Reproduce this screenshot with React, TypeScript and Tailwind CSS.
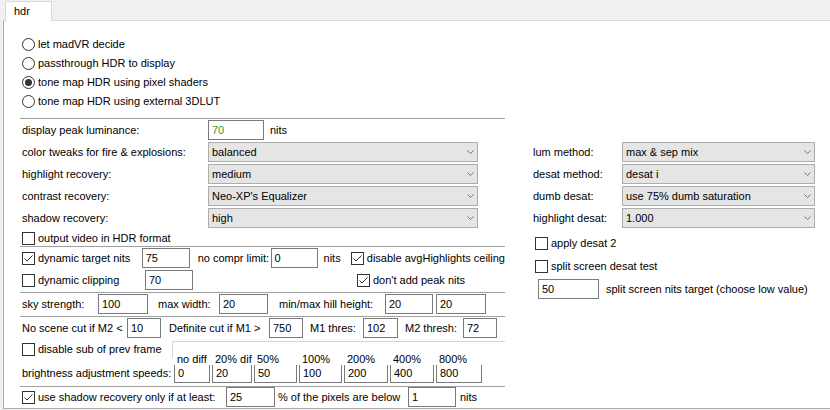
import React from "react";

const font = "[font-family:'Liberation_Sans',Arial,sans-serif]";

function Radio({ checked, label }: { checked?: boolean; label: string }) {
  return (
    <div className="flex h-[19px] items-center pl-[2px]">
      <span className="flex h-[13px] w-[13px] items-center justify-center rounded-full border border-[#333] bg-white">
        {checked && <span className="h-[7px] w-[7px] rounded-full bg-[#333]" />}
      </span>
      <span className="ml-[3px]">{label}</span>
    </div>
  );
}

function Check({
  checked,
  label,
  className = "",
}: {
  checked?: boolean;
  label: string;
  className?: string;
}) {
  return (
    <div className={`flex items-center ${className}`}>
      <span className="flex h-[13px] w-[13px] shrink-0 items-center justify-center border border-[#333] bg-white">
        {checked && (
          <svg width="11" height="11" viewBox="0 0 11 11">
            <polyline points="1.5,5.5 4,8 9.5,2.5" fill="none" stroke="#333" strokeWidth="1" />
          </svg>
        )}
      </span>
      <span className="ml-[3px] whitespace-nowrap">{label}</span>
    </div>
  );
}

function Field({
  value,
  className = "",
  green,
}: {
  value: string;
  className?: string;
  green?: boolean;
}) {
  return (
    <div
      className={`flex h-[20px] shrink-0 items-center border border-[#7a7a7a] bg-white pl-[3px] ${
        green ? "text-[#2e9a2e]" : ""
      } ${className}`}
    >
      {value}
    </div>
  );
}

function Combo({ value, className = "" }: { value: string; className?: string }) {
  return (
    <div
      className={`flex h-[20px] items-center justify-between border border-[#adadad] bg-[#e5e5e5] pl-[3px] pr-[3px] ${className}`}
    >
      <span>{value}</span>
      <svg width="7" height="4" viewBox="0 0 7 4">
        <polyline points="0.5,0.5 3.5,3.5 6.5,0.5" fill="none" stroke="#707070" strokeWidth="1" />
      </svg>
    </div>
  );
}

function Sep({ className = "" }: { className?: string }) {
  return <div className={`h-px w-[485px] bg-[#a0a0a0] ${className}`} />;
}

const leftCombos = [
  ["color tweaks for fire & explosions:", "balanced"],
  ["highlight recovery:", "medium"],
  ["contrast recovery:", "Neo-XP's Equalizer"],
  ["shadow recovery:", "high"],
];

const rightCombos = [
  ["lum method:", "max & sep mix"],
  ["desat method:", "desat i"],
  ["dumb desat:", "use 75% dumb saturation"],
  ["highlight desat:", "1.000"],
];

const speeds = [
  { head: "no diff", val: "0", w: "w-[36px]" },
  { head: "20% dif", val: "20", w: "w-[40px]" },
  { head: "50%", val: "50", w: "w-[43px]" },
  { head: "100%", val: "100", w: "w-[43px]" },
  { head: "200%", val: "200", w: "w-[44px]" },
  { head: "400%", val: "400", w: "w-[44px]" },
  { head: "800%", val: "800", w: "w-[46px]" },
];

export default function App() {
  return (
    <div className={`h-[410px] w-[830px] overflow-hidden bg-[#f0f0f0] text-[11px] leading-none text-black ${font}`}>
      {/* tab strip */}
      <div className="flex h-[20px] items-end pl-[5px]">
        <div className="relative z-10 -mb-px h-[20px] w-[47px] border border-b-0 border-[#d9d9d9] bg-white pl-[8px] pt-[4px]">
          hdr
        </div>
      </div>

      <div className="ml-[3px] h-[389px] border-b border-l border-t border-[#adadad] border-t-[#d9d9d9] bg-white pl-[16px] pt-[14px]">
        <Radio label="let madVR decide" />
        <Radio label="passthrough HDR to display" />
        <Radio checked label="tone map HDR using pixel shaders" />
        <Radio label="tone map HDR using external 3DLUT" />

        <Sep className="mt-[7px]" />

        <div className="mt-[1px] flex h-[20px] items-center pl-[2px]">
          <span className="w-[186px]">display peak luminance:</span>
          <Field value="70" green className="w-[56px]" />
          <span className="ml-[6px]">nits</span>
        </div>

        <div className="mt-[2px] flex">
          {/* left column */}
          <div className="w-[485px]">
            {leftCombos.map(([label, value]) => (
              <div key={label} className="flex h-[22px] items-start pl-[2px]">
                <span className="w-[186px] leading-[20px]">{label}</span>
                <Combo value={value} className="w-[270px]" />
              </div>
            ))}

            <Check label="output video in HDR format" className="h-[16px] pl-[2px]" />
            <Sep />

            <div className="mt-[1px] flex h-[20px] items-center pl-[2px]">
              <Check checked label="dynamic target nits" className="w-[123px]" />
              <Field value="75" className="w-[48px]" />
              <span className="ml-[8px] w-[75px]">no compr limit:</span>
              <Field value="0" className="w-[47px]" />
              <span className="ml-[6px] w-[28px]">nits</span>
              <Check checked label="disable avgHighlights ceiling" />
            </div>

            <div className="mt-[2px] flex h-[20px] items-center pl-[2px]">
              <Check label="dynamic clipping" className="w-[123px]" />
              <Field value="70" className="w-[48px]" />
              <span className="w-[164px]" />
              <Check checked label="don't add peak nits" />
            </div>

            <Sep className="mt-[2px]" />

            <div className="mt-[1px] flex h-[20px] items-center pl-[2px]">
              <span className="w-[76px]">sky strength:</span>
              <Field value="100" className="w-[50px]" />
              <span className="ml-[10px] w-[61px]">max width:</span>
              <Field value="20" className="w-[49px]" />
              <span className="ml-[11px] w-[106px]">min/max hill height:</span>
              <Field value="20" className="w-[48px]" />
              <Field value="20" className="ml-[3px] w-[50px]" />
            </div>

            <Sep className="mt-[2px]" />

            <div className="mt-[1px] flex h-[20px] items-center pl-[2px]">
              <span className="w-[105px]">No scene cut if M2 &lt;</span>
              <Field value="10" className="w-[34px]" />
              <span className="ml-[8px] w-[100px]">Definite cut if M1 &gt;</span>
              <Field value="750" className="w-[34px]" />
              <span className="ml-[7px] w-[53px]">M1 thres:</span>
              <Field value="102" className="w-[35px]" />
              <span className="ml-[7px] w-[58px]">M2 thresh:</span>
              <Field value="72" className="w-[34px]" />
            </div>

            <div className="mt-[1px] flex pl-[2px]">
              <div className="flex w-[152px] flex-col">
                <Check label="disable sub of prev frame" className="h-[20px]" />
                <div className="mt-[4px] flex h-[20px] items-center whitespace-nowrap">
                  brightness adjustment speeds:
                </div>
              </div>
              <div className="flex flex-col">
                <div className="-ml-[2px] mt-[2px] h-[17px] w-[333px] border-l border-t border-[#d5d5d5]" />
                <div className="relative -mt-[5px] flex h-[12px] gap-[2px] leading-[12px]">
                  {speeds.map((s) => (
                    <span key={s.head} className={`${s.w} whitespace-nowrap bg-white pl-[3px]`}>
                      {s.head}
                    </span>
                  ))}
                </div>
                <div className="-mt-[2px] flex gap-[2px]">
                  {speeds.map((s) => (
                    <Field key={s.head} value={s.val} className={s.w} />
                  ))}
                </div>
              </div>
            </div>

            <Sep className="mt-[3px]" />

            <div className="flex h-[20px] items-center pl-[2px]">
              <Check checked label="use shadow recovery only if at least:" className="w-[204px]" />
              <Field value="25" className="w-[49px]" />
              <span className="ml-[3px] w-[130px]">% of the pixels are below</span>
              <Field value="1" className="w-[48px]" />
              <span className="ml-[4px]">nits</span>
            </div>
          </div>

          {/* right column */}
          <div className="ml-[28px]">
            {rightCombos.map(([label, value]) => (
              <div key={label} className="flex h-[22px] items-start">
                <span className="w-[89px] leading-[20px]">{label}</span>
                <Combo value={value} className="w-[193px]" />
              </div>
            ))}
            <Check label="apply desat 2" className="h-[26px] pl-[2px]" />
            <Check label="split screen desat test" className="h-[20px] pl-[2px]" />
            <div className="mt-[3px] flex h-[20px] items-center pl-[5px]">
              <Field value="50" className="w-[61px]" />
              <span className="ml-[7px]">split screen nits target (choose low value)</span>
            </div>
          </div>
        </div>
      </div>
    </div>
  );
}
